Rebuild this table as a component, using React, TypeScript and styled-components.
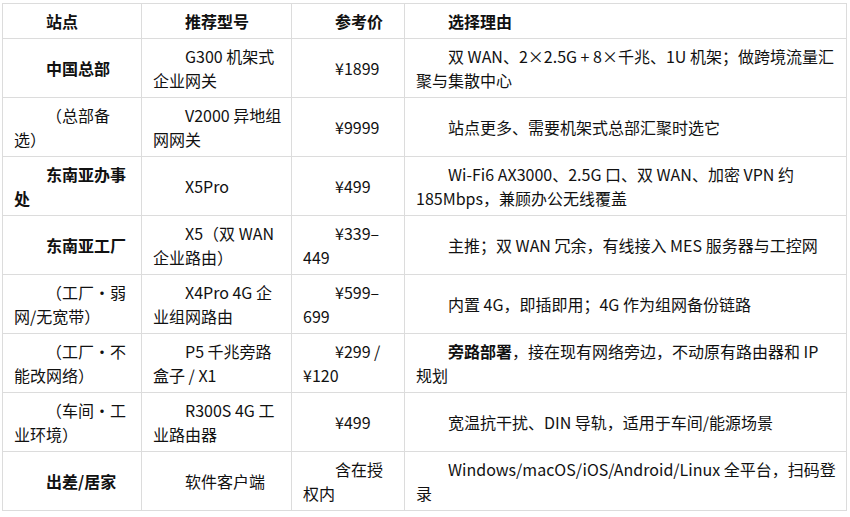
import React from "react";
import styled, { createGlobalStyle } from "styled-components";

const GlobalStyle = createGlobalStyle`
  html, body {
    margin: 0;
    padding: 0;
    background: #fff;
  }
  body {
    font-family: "Noto Sans CJK SC", "Noto Sans", sans-serif;
    color: #111;
  }
`;

const Page = styled.div`
  padding: 3px 4px 0 2px;
`;

const Table = styled.table`
  width: 844px;
  table-layout: fixed;
  border-collapse: collapse;
  font-size: 16px;
  line-height: 24px;
`;

const Cell = styled.td<{ $bold?: boolean }>`
  border: 1px solid #dcdcdc;
  padding: 5px 8px 5px 11px;
  text-indent: 2em;
  vertical-align: middle;
  text-align: left;
  font-weight: ${(p) => (p.$bold ? 700 : 400)};
`;

const HeadCell = styled.th`
  border: 1px solid #dcdcdc;
  padding: 5px 8px 5px 11px;
  text-indent: 2em;
  text-align: left;
  font-weight: 700;
`;

const Strong = styled.b`
  font-weight: 700;
`;

// keeps a word on one line, like the source's wrap
const Keep = styled.span`
  white-space: nowrap;
`;

type Row = {
  site: string;
  bold?: boolean;
  model: string;
  price: string;
  reason: React.ReactNode;
};

const rows: Row[] = [
  {
    site: "中国总部",
    bold: true,
    model: "G300 机架式企业网关",
    price: "¥1899",
    reason: "双 WAN、2×2.5G + 8×千兆、1U 机架；做跨境流量汇聚与集散中心",
  },
  {
    site: "（总部备选）",
    model: "V2000 异地组网网关",
    price: "¥9999",
    reason: "站点更多、需要机架式总部汇聚时选它",
  },
  {
    site: "东南亚办事处",
    bold: true,
    model: "X5Pro",
    price: "¥499",
    reason: "Wi-Fi6 AX3000、2.5G 口、双 WAN、加密 VPN 约 185Mbps，兼顾办公无线覆盖",
  },
  {
    site: "东南亚工厂",
    bold: true,
    model: "X5（双 WAN 企业路由）",
    price: "¥339–449",
    reason: "主推；双 WAN 冗余，有线接入 MES 服务器与工控网",
  },
  {
    site: "（工厂・弱网/无宽带）",
    model: "X4Pro 4G 企业组网路由",
    price: "¥599–699",
    reason: "内置 4G，即插即用；4G 作为组网备份链路",
  },
  {
    site: "（工厂・不能改网络）",
    model: "P5 千兆旁路盒子 / X1",
    price: "¥299 / ¥120",
    reason: (
      <>
        <Strong>旁路部署</Strong>，接在现有网络旁边，不动原有路由器和 IP <Keep>规划</Keep>
      </>
    ),
  },
  {
    site: "（车间・工业环境）",
    model: "R300S 4G 工业路由器",
    price: "¥499",
    reason: "宽温抗干扰、DIN 导轨，适用于车间/能源场景",
  },
  {
    site: "出差/居家",
    bold: true,
    model: "软件客户端",
    price: "含在授权内",
    reason: "Windows/macOS/iOS/Android/Linux 全平台，扫码登录",
  },
];

export default function App() {
  return (
    <Page>
      <GlobalStyle />
      <Table>
        <colgroup>
          <col style={{ width: 139 }} />
          <col style={{ width: 150 }} />
          <col style={{ width: 113 }} />
          <col style={{ width: 442 }} />
        </colgroup>
        <thead>
          <tr>
            <HeadCell>站点</HeadCell>
            <HeadCell>推荐型号</HeadCell>
            <HeadCell>参考价</HeadCell>
            <HeadCell>选择理由</HeadCell>
          </tr>
        </thead>
        <tbody>
          {rows.map((r) => (
            <tr key={r.site}>
              <Cell $bold={r.bold}>{r.site}</Cell>
              <Cell>{r.model}</Cell>
              <Cell>{r.price}</Cell>
              <Cell>{r.reason}</Cell>
            </tr>
          ))}
        </tbody>
      </Table>
    </Page>
  );
}
